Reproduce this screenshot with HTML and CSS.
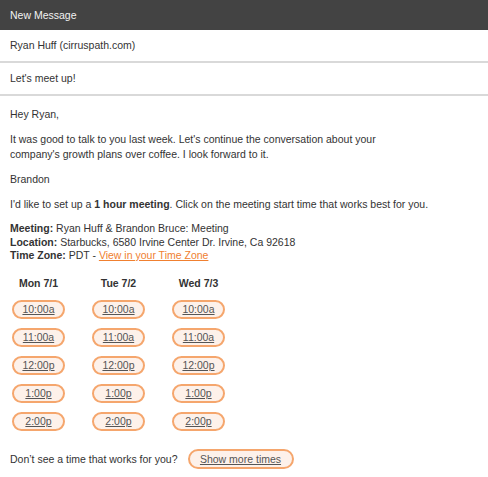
FILE: index.html
```html
<!DOCTYPE html>
<html>
<head>
<meta charset="utf-8">
<link rel="stylesheet" href="styles.css">
</head>
<body>
<div class="compose">
  <div class="title-bar">New Message</div>
  <div class="field">Ryan Huff (cirruspath.com)</div>
  <div class="field">Let's meet up!</div>
  <div class="body">
    <p>Hey Ryan,</p>
    <p>It was good to talk to you last week. Let's continue the conversation about your<br>company's growth plans over coffee. I look forward to it.</p>
    <p>Brandon</p>
    <p>I'd like to set up a <b>1 hour meeting</b>. Click on the meeting start time that works best for you.</p>
    <p class="details">
      <b>Meeting:</b> Ryan Huff &amp; Brandon Bruce: Meeting<br>
      <b>Location:</b> Starbucks, 6580 Irvine Center Dr. Irvine, Ca 92618<br>
      <b>Time Zone:</b> PDT - <a class="tz" href="#">View in your Time Zone</a>
    </p>
    <div class="days">
      <div class="day">
        <div class="day-name">Mon 7/1</div>
        <a class="slot" href="#">10:00a</a>
        <a class="slot" href="#">11:00a</a>
        <a class="slot" href="#">12:00p</a>
        <a class="slot" href="#">1:00p</a>
        <a class="slot" href="#">2:00p</a>
      </div>
      <div class="day">
        <div class="day-name">Tue 7/2</div>
        <a class="slot" href="#">10:00a</a>
        <a class="slot" href="#">11:00a</a>
        <a class="slot" href="#">12:00p</a>
        <a class="slot" href="#">1:00p</a>
        <a class="slot" href="#">2:00p</a>
      </div>
      <div class="day">
        <div class="day-name">Wed 7/3</div>
        <a class="slot" href="#">10:00a</a>
        <a class="slot" href="#">11:00a</a>
        <a class="slot" href="#">12:00p</a>
        <a class="slot" href="#">1:00p</a>
        <a class="slot" href="#">2:00p</a>
      </div>
    </div>
    <div class="more">
      <span>Don’t see a time that works for you?</span>
      <a class="slot more-btn" href="#">Show more times</a>
    </div>
  </div>
</div>
</body>
</html>
```

FILE: styles.css
```css
html, body {
  margin: 0;
  padding: 0;
  background: #fff;
}

.compose {
  font-family: "Liberation Sans", Arial, sans-serif;
  font-size: 10.5px;
  color: #333;
  width: 488px;
}

.title-bar {
  background: #434343;
  color: #f2f2f2;
  height: 30px;
  line-height: 30px;
  padding-left: 10px;
}

.field {
  height: 31px;
  line-height: 31px;
  padding-left: 10px;
  border-bottom: 2px solid #d9d9d9;
}

.body {
  padding: 11px 10px 0 10px;
}

.body p {
  margin: 0 0 10px 0;
  line-height: 15px;
}

.body p.brandon {
  margin-bottom: 8px;
}

.body p.details {
  line-height: 13.5px;
  margin-bottom: 13px;
}

.tz {
  color: #f08030;
  text-decoration: underline;
}

.days {
  display: flex;
  gap: 27px;
  padding-left: 2px;
}

.day {
  display: flex;
  flex-direction: column;
  gap: 9px;
  width: 53px;
}

.day-name {
  font-weight: bold;
  text-align: center;
  line-height: 15px;
}

.slot {
  display: block;
  box-sizing: border-box;
  height: 19px;
  line-height: 15px;
  border: 2px solid #f5a66d;
  border-radius: 10px;
  background: #fdf1ea;
  color: #555;
  text-align: center;
  text-decoration: underline;
}

.more {
  display: flex;
  align-items: center;
  gap: 10px;
  margin-top: 18px;
}

.more-btn {
  width: 106px;
  height: 20px;
  line-height: 16px;
  border-radius: 10px;
}
```
